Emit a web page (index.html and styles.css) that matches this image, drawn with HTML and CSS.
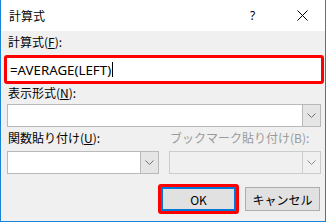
FILE: index.html
```html
<!DOCTYPE html>
<html lang="ja">
<head>
    <meta charset="UTF-8">
    <title>計算式</title>
    <link rel="stylesheet" href="styles.css">
</head>
<body>
    <div class="dialog">
        <div class="titlebar">
            <span class="title">計算式</span>
            <span class="help">?</span>
            <span class="close">
                <svg width="11" height="11" viewBox="0 0 11 11">
                    <path d="M0.5 0.5 L10.5 10.5 M10.5 0.5 L0.5 10.5" stroke="#000" stroke-width="1" fill="none"/>
                </svg>
            </span>
        </div>

        <div class="content">
            <div class="label">計算式(<u>F</u>):</div>
            <div class="mark field-mark">
                <div class="input">=AVERAGE(LEFT)<span class="caret"></span></div>
            </div>

            <div class="label label-format">表示形式(<u>N</u>):</div>
            <div class="combo">
                <span class="combo-value"></span>
                <span class="combo-btn">
                    <svg width="9" height="5" viewBox="0 0 9 5"><path d="M0.5 0.5 L4.5 4.5 L8.5 0.5" stroke="#707070" fill="none"/></svg>
                </span>
            </div>

            <div class="pair">
                <div class="col">
                    <div class="label">関数貼り付け(<u>U</u>):</div>
                    <div class="combo">
                        <span class="combo-value"></span>
                        <span class="combo-btn">
                            <svg width="9" height="5" viewBox="0 0 9 5"><path d="M0.5 0.5 L4.5 4.5 L8.5 0.5" stroke="#707070" fill="none"/></svg>
                        </span>
                    </div>
                </div>
                <div class="col disabled">
                    <div class="label">ブックマーク貼り付け(B):</div>
                    <div class="combo">
                        <span class="combo-value"></span>
                        <span class="combo-btn">
                            <svg width="9" height="5" viewBox="0 0 9 5"><path d="M0.5 0.5 L4.5 4.5 L8.5 0.5" stroke="#8a8a8a" fill="none"/></svg>
                        </span>
                    </div>
                </div>
            </div>

            <div class="buttons">
                <div class="mark btn-mark">
                    <button class="btn btn-default">OK</button>
                </div>
                <button class="btn">キャンセル</button>
            </div>
        </div>
    </div>
</body>
</html>
```

FILE: styles.css
```css
body {
    margin: 0;
    background: #ffffff;
    font-family: "Noto Sans CJK JP", sans-serif;
    font-size: 12px;
    color: #000000;
}

.dialog {
    width: 324px;
    height: 221px;
    border: 1px solid #1883d7;
    border-top: none;
    background: #f0f0f0;
    display: flex;
    flex-direction: column;
}

/* Title bar */
.titlebar {
    height: 31px;
    background: #ffffff;
    display: flex;
    align-items: center;
    padding-left: 8px;
}

.title {
    flex-grow: 1;
    line-height: 16px;
}

.help {
    width: 10px;
    margin-right: 37px;
    line-height: 16px;
    font-family: "Noto Sans", sans-serif;
}

.close {
    display: flex;
    margin-right: 17px;
}

/* Content */
.content {
    padding: 0 4px 0 6px;
    display: flex;
    flex-direction: column;
}

.label {
    line-height: 16px;
    padding-left: 1px;
    white-space: nowrap;
}

.content > .label:first-child {
    margin-top: 3px;
}

.label-format {
    margin-top: 1px;
}

.mark {
    border: 3px solid #ff0000;
    border-radius: 3px;
}

.field-mark {
    margin: 5px -3px 0;
}

.input {
    height: 23px;
    background: #ffffff;
    padding-left: 3px;
    display: flex;
    align-items: center;
    font-family: "Noto Sans", sans-serif;
    font-size: 13.3px;
}

.caret {
    width: 1px;
    height: 15px;
    background: #000000;
    margin-left: 1px;
}

.combo {
    height: 23px;
    box-sizing: border-box;
    border: 1px solid #b9b9b9;
    background: #ffffff;
    display: flex;
    margin-top: 3px;
}

.combo-value {
    flex-grow: 1;
}

.combo-btn {
    width: 17px;
    background: #e5e5e5;
    border-left: 1px solid #b9b9b9;
    display: flex;
    align-items: center;
    justify-content: center;
}

.pair {
    display: flex;
    gap: 10px;
    margin-top: 3px;
}

.col {
    flex: 1;
}

.col .combo {
    margin-top: 5px;
}

.disabled .label {
    color: #9a9a9a;
}

.disabled .combo {
    background: #f0f0f0;
    border-color: #cccccc;
}

.disabled .combo-btn {
    background: #f0f0f0;
    border-left-color: #cccccc;
}

/* Buttons */
.buttons {
    display: flex;
    justify-content: flex-end;
    gap: 9px;
    margin-top: 13px;
    padding-right: 1px;
}

.btn {
    width: 75px;
    height: 24px;
    padding: 0;
    background: #e1e1e1;
    border: 1px solid #adadad;
    font-family: "Noto Sans CJK JP", sans-serif;
    font-size: 12px;
    color: #000000;
}

.btn-mark {
    margin: -3px;
    display: flex;
}

.btn-default {
    border: 2px solid #0078d7;
}
```
